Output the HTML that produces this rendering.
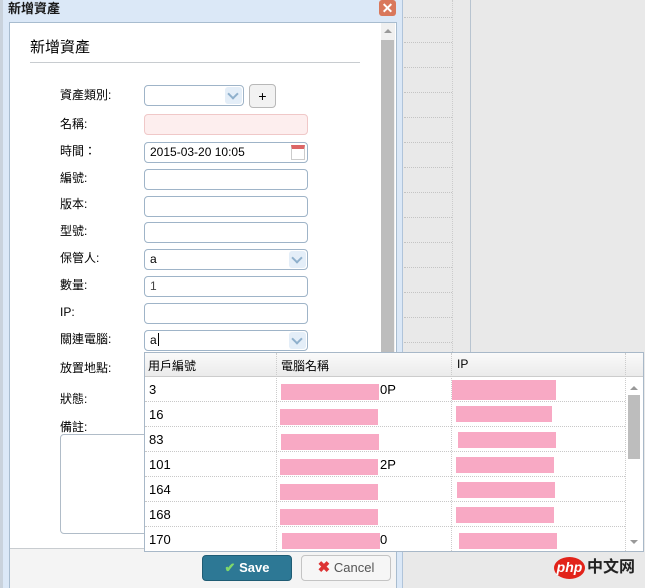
<!DOCTYPE html>
<html><head><meta charset="utf-8"><style>
*{margin:0;padding:0;box-sizing:border-box}
body{width:645px;height:588px;overflow:hidden;background:#e9e9e9;position:relative;font-family:"Liberation Sans","Noto Sans CJK TC",sans-serif;font-size:12px;color:#000}
.a{position:absolute}
.lbl{position:absolute;left:60px;font-size:12px;line-height:14px}
.in{position:absolute;left:144px;width:164px;height:21px;border:1px solid #9fb4c8;border-radius:4px;background:#fff;font-size:12px;line-height:19px;padding-left:5px}
.dd{position:absolute;right:1px;top:1px;width:17px;height:17px;background:#e4eef8;border-radius:3px}
.dd:after{content:"";position:absolute;left:4px;top:3px;width:6px;height:6px;border-right:2px solid #8fb0cc;border-bottom:2px solid #8fb0cc;transform:rotate(45deg)}
.dot{position:absolute;left:404px;width:48px;border-top:1px dotted #c4c4c4}
.row{position:absolute;left:145px;width:480px;height:25px;border-bottom:1px dotted #c8c8c8;font-size:13px;line-height:26px}
.row span{position:absolute;left:4px}
.pk{position:absolute;background:#f8a9c4;height:16px}
</style></head><body>
<div class="a" style="left:470px;top:0;width:1px;height:352px;background:#b8c4d0"></div>
<div class="a" style="left:452px;top:0;width:1px;height:352px;border-left:1px dotted #ccc"></div>
<div class="dot" style="top:17px"></div><div class="dot" style="top:42px"></div><div class="dot" style="top:67px"></div><div class="dot" style="top:92px"></div><div class="dot" style="top:117px"></div><div class="dot" style="top:142px"></div><div class="dot" style="top:167px"></div><div class="dot" style="top:192px"></div><div class="dot" style="top:217px"></div><div class="dot" style="top:242px"></div><div class="dot" style="top:267px"></div><div class="dot" style="top:292px"></div><div class="dot" style="top:317px"></div><div class="dot" style="top:342px"></div>
<!-- window -->
<div class="a" style="left:0;top:0;width:403px;height:588px;background:#dbe8f7;border-right:1px solid #b0c4da"></div>
<div class="a" style="left:0;top:0;width:3px;height:588px;background:#c9d2dc"></div>
<div class="a" style="left:8px;top:0;font-size:13px;font-weight:bold;line-height:18px;color:#1a1a1a">新增資產</div>
<div class="a" style="left:379px;top:0;width:17px;height:16px;background:#d9785c;border-radius:3px;color:#fff;font-weight:bold;font-size:14px;line-height:16px;text-align:center">✕</div>
<div class="a" style="left:9px;top:22px;width:388px;height:566px;background:#fff;border:1px solid #a8bccf"></div>
<div class="a" style="left:30px;top:39px;font-size:15px;line-height:18px">新增資產</div>
<div class="a" style="left:30px;top:62px;width:330px;height:1px;background:#c8ccd0"></div>
<div class="a" style="left:381px;top:23px;width:14px;height:330px;background:#f0f0f0"></div>
<div class="a" style="left:384px;top:29px;border:4px solid transparent;border-bottom:4px solid #999;border-top:0"></div>
<div class="a" style="left:381px;top:40px;width:13px;height:312px;background:#bdbdbd"></div>

<div class="lbl" style="top:88px">資產類別:</div>
<div class="lbl" style="top:117px">名稱:</div>
<div class="lbl" style="top:144px">時間：</div>
<div class="lbl" style="top:171px">編號:</div>
<div class="lbl" style="top:197px">版本:</div>
<div class="lbl" style="top:224px">型號:</div>
<div class="lbl" style="top:251px">保管人:</div>
<div class="lbl" style="top:278px">數量:</div>
<div class="lbl" style="top:305px">IP:</div>
<div class="lbl" style="top:332px">關連電腦:</div>
<div class="lbl" style="top:361px">放置地點:</div>
<div class="lbl" style="top:392px">狀態:</div>
<div class="lbl" style="top:420px">備註:</div>

<div class="in" style="top:85px;width:100px"><div class="dd"></div></div>
<div class="a" style="left:249px;top:84px;width:27px;height:24px;border:1px solid #b8b8b8;border-radius:4px;background:#f2f2f2;text-align:center;line-height:22px;font-size:14px">+</div>
<div class="in" style="top:114px;background:#fdeeee;border-color:#f0c8c8"></div>
<div class="in" style="top:142px">2015-03-20 10:05<div class="a" style="right:2px;top:2px;width:14px;height:15px;border:1px solid #ccc;border-top:4px solid #d66;background:#fff"></div></div>
<div class="in" style="top:169px"></div>
<div class="in" style="top:196px"></div>
<div class="in" style="top:222px"></div>
<div class="in" style="top:249px">a<div class="dd"></div></div>
<div class="in" style="top:276px;color:#444">1</div>
<div class="in" style="top:303px"></div>
<div class="in" style="top:330px">a<span style="display:inline-block;width:1px;height:13px;background:#000;vertical-align:-2px;margin-left:1px"></span><div class="dd"></div></div>
<div class="a" style="left:60px;top:434px;width:100px;height:100px;border:1px solid #b0bcc8;border-radius:4px"></div>

<div class="a" style="left:10px;top:548px;width:386px;height:40px;background:#f4f4f4;border-top:1px solid #c8ccd0"></div>
<div class="a" style="left:202px;top:555px;width:90px;height:26px;background:#2d7895;border:1px solid #1f5c74;border-radius:4px;color:#fff;font-weight:bold;font-size:13px;line-height:24px;text-align:center"><span style="color:#7fd86a">✔</span> Save</div>
<div class="a" style="left:301px;top:555px;width:90px;height:26px;background:#f6f6f6;border:1px solid #c4c4c4;border-radius:4px;color:#555;font-size:13px;line-height:24px;text-align:center"><span style="color:#d33;font-weight:bold;font-size:15px">✖</span> Cancel</div>

<!-- grid -->
<div class="a" style="left:144px;top:352px;width:500px;height:200px;background:#fff;border:1px solid #a8b8c8"></div>
<div class="a" style="left:145px;top:353px;width:498px;height:24px;background:linear-gradient(#fafafa,#ebebeb);border-bottom:1px solid #ccc"></div>
<div class="a" style="left:148px;top:357px;font-size:12px">用戶編號</div>
<div class="a" style="left:281px;top:357px;font-size:12px">電腦名稱</div>
<div class="a" style="left:457px;top:357px;font-size:12px">IP</div>
<div class="a" style="left:276px;top:353px;height:198px;border-left:1px dotted #ccc"></div>
<div class="a" style="left:451px;top:353px;height:198px;border-left:1px dotted #ccc"></div>
<div class="a" style="left:625px;top:353px;height:198px;border-left:1px dotted #ccc"></div>
<div class="row" style="top:377px"><span>3</span></div>
<div class="row" style="top:402px"><span>16</span></div>
<div class="row" style="top:427px"><span>83</span></div>
<div class="row" style="top:452px"><span>101</span></div>
<div class="row" style="top:477px"><span>164</span></div>
<div class="row" style="top:502px"><span>168</span></div>
<div class="row" style="top:527px;border:0"><span>170</span></div>
<div class="a" style="left:380px;top:382px;font-size:13px">0P</div>
<div class="a" style="left:380px;top:457px;font-size:13px">2P</div>
<div class="a" style="left:380px;top:532px;font-size:13px">0</div>
<div class="pk" style="left:281px;top:384px;width:98px"></div>
<div class="pk" style="left:280px;top:409px;width:98px"></div>
<div class="pk" style="left:281px;top:434px;width:98px"></div>
<div class="pk" style="left:280px;top:459px;width:98px"></div>
<div class="pk" style="left:280px;top:484px;width:98px"></div>
<div class="pk" style="left:280px;top:509px;width:98px"></div>
<div class="pk" style="left:282px;top:533px;width:98px"></div>
<div class="pk" style="left:452px;top:380px;width:104px;height:20px"></div>
<div class="pk" style="left:456px;top:406px;width:96px"></div>
<div class="pk" style="left:458px;top:432px;width:98px"></div>
<div class="pk" style="left:456px;top:457px;width:98px"></div>
<div class="pk" style="left:457px;top:482px;width:98px"></div>
<div class="pk" style="left:456px;top:507px;width:98px"></div>
<div class="pk" style="left:459px;top:533px;width:98px"></div>
<div class="a" style="left:628px;top:395px;width:12px;height:64px;background:#bdbdbd"></div>
<div class="a" style="left:630px;top:386px;border:4px solid transparent;border-bottom:4px solid #999;border-top:0"></div>
<div class="a" style="left:630px;top:540px;border:4px solid transparent;border-top:4px solid #999;border-bottom:0"></div>

<div class="a" style="left:554px;top:557px;width:31px;height:22px;background:#e2231a;border-radius:50%;color:#fff;font-style:italic;font-weight:bold;font-size:14px;line-height:20px;text-align:center">php</div>
<div class="a" style="left:587px;top:557px;font-size:16px;font-weight:bold;color:#222;line-height:22px">中文网</div>
</body></html>
